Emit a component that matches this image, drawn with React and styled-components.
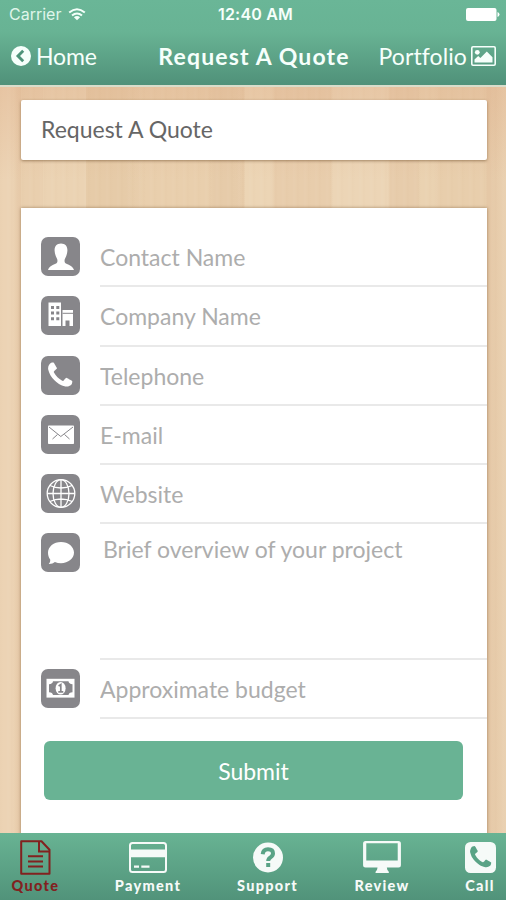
//react
import React, { useState } from 'react'

//style
import styled, { createGlobalStyle } from 'styled-components'

//icons
const PHONE = 'M1600 1240q0 27-10 70.5t-21 68.5q-21 50-122 106-94 51-186 51-27 0-53-3.5t-57-12.5-47-14.5-55.5-20.5-49.5-18q-98-35-175-83-127-79-264-216t-216-264q-48-77-83-175-3-9-18-49.5t-20.5-55.5-14.5-47-12.5-57-3.5-53q0-92 51-186 56-101 106-122 25-11 68.5-21t70.5-10q14 0 21 3 18 6 53 76 11 19 30 54t35 63.5 31 53.5q3 4 17.5 25t21.5 35.5 7 28.5q0 20-28.5 50t-62 55-62 53-28.5 46q0 9 5 22.5t8.5 20.5 14 24 11.5 19q76 137 174 235t235 174q2 1 19 11.5t24 14 20.5 8.5 22.5 5q18 0 46-28.5t53-62 55-62 50-28.5q14 0 28.5 7t35.5 21.5 25 17.5q25 15 53.5 31t63.5 35 54 30q70 35 76 53 3 7 3 21z'

const WifiIcon = () => (
    <svg width="18" height="13" viewBox="0 0 18 13" fill="none" stroke="#f4fffa" strokeWidth="2">
        <path d="M1.2 4.6Q9-2 16.8 4.6" />
        <path d="M4 7.6Q9 3.4 14 7.6" />
        <path d="M9 12.2L5.9 9.2Q9 7 12.1 9.2z" fill="#f4fffa" stroke="none" />
    </svg>
)

const BatteryIcon = () => (
    <svg width="34" height="13" viewBox="0 0 34 13" fill="#fff">
        <rect x="0" y="0" width="30.5" height="13" rx="2" />
        <path d="M31.5 4v5q2-.7 2-2.5t-2-2.5z" />
    </svg>
)

const BackIcon = () => (
    <svg width="20" height="20" viewBox="0 0 20 20">
        <circle cx="10" cy="10" r="10" fill="#f6fffb" />
        <path d="M12.2 4.8L7 10l5.2 5.2" fill="none" stroke="#4e9379" strokeWidth="2.9" />
    </svg>
)

const PictureIcon = () => (
    <svg width="25" height="20" viewBox="0 0 25 20" fill="#f6fffb">
        <rect x=".8" y=".8" width="23.4" height="18.4" rx="1.2" fill="none" stroke="#f6fffb" strokeWidth="1.6" />
        <circle cx="6.3" cy="6.3" r="2.4" />
        <path d="M3.500 16.500v-3l3.700-3.600 2.200 2.100 6.400-6.500 5.700 5.700v5.300z" />
    </svg>
)

const PersonIcon = () => (
    <svg width="39" height="39" viewBox="0 0 39 39" fill="#fff">
        <path d="M20 6.500c4.300 0 6.600 3 6.400 7.200-.1 2.300-.9 5.500-2.300 7.700-.8 1.200-.8 3.900.4 4.800 2.200 1.500 7.100 2 8.500 6.800H7c1.400-4.800 6.300-5.300 8.500-6.800 1.200-.9 1.200-3.600.4-4.800-1.400-2.200-2.200-5.400-2.300-7.700-.2-4.200 2.100-7.200 6.400-7.200z" />
    </svg>
)

const BuildingIcon = () => (
    <svg width="39" height="39" viewBox="0 0 39 39">
        <path d="M7.500 6.500h12.500v23.500H7.500zM21.500 14h10.500v16H21.500z" fill="#fff" />
        <path d="M10 10h3v3h-3zM15.300 10h3v3h-3zM10 15.600h3v3h-3zM15.300 15.600h3v3h-3zM10 21.200h3v3h-3zM15.300 21.200h3v3h-3zM24.500 24.500h4V30h-4z" fill="#87868a" />
        <path d="M21.500 17.300H32" stroke="#87868a" strokeWidth="1" />
    </svg>
)

const PhoneIcon = () => (
    <svg width="39" height="39" viewBox="0 0 39 39">
        <path d={PHONE} transform="translate(3.8 4.2) scale(.0172)" fill="#fff" />
    </svg>
)

const MailIcon = () => (
    <svg width="39" height="39" viewBox="0 0 39 39">
        <rect x="7" y="10.5" width="26" height="18.5" rx=".8" fill="#fff" />
        <path d="M8 12l11.800 9.500L32 12M11.500 24l5-4.500M28.500 24l-5-4.500" fill="none" stroke="#87868a" strokeWidth="1" />
    </svg>
)

const GlobeIcon = () => (
    <svg width="39" height="39" viewBox="0 0 39 39" fill="none" stroke="#fff" strokeWidth="1.3">
        <circle cx="20" cy="19.5" r="13.8" />
        <ellipse cx="20" cy="19.5" rx="8" ry="13.8" />
        <path d="M20 5.700v27.600M6.200 19.500h27.600M8.800 11.500q11.200 5 22.400 0M8.800 27.500q11.200-5 22.400 0" />
    </svg>
)

const ChatIcon = () => (
    <svg width="39" height="39" viewBox="0 0 39 39">
        <path d="M20 9c7.300 0 13 4.700 13 10.600s-5.700 10.700-13 10.700c-2.200 0-4.300-.4-6.100-1.200-1.500 1.300-3.600 2-6.200 1.900 1.200-1.100 1.700-2.600 1.500-4.400C7.700 24.700 7 22.300 7 19.600 7 13.700 12.700 9 20 9z" fill="#fff" />
    </svg>
)

const MoneyIcon = () => (
    <svg width="39" height="39" viewBox="0 0 39 39">
        <rect x="5.5" y="9.8" width="28" height="18.8" fill="#fff" />
        <path d="M12 12.300h15.500q.3 2.700 4 2.900v8q-3.700.2-4 2.900H12q-.3-2.700-4-2.900v-8q3.700-.2 4-2.900z" fill="#87868a" />
        <ellipse cx="19.6" cy="19.2" rx="5" ry="6.3" fill="#fff" />
        <path d="M17.600 17l2.200-1.400v7M17.300 22.800h5" fill="none" stroke="#87868a" strokeWidth="1.7" />
    </svg>
)

const FileIcon = () => (
    <svg width="31" height="35" viewBox="0 0 31 35" fill="none" stroke="#82211f" strokeWidth="2">
        <path d="M1.200 1.200h20.300l8 8.500V33.800H1.200z" strokeLinejoin="round" />
        <path d="M19 1.500v10h10.300M8 16.200h15M8 21.400h15M8 26.600h15" />
    </svg>
)

const CardIcon = () => (
    <svg width="38" height="31" viewBox="0 0 38 31" fill="#f6faf8">
        <rect x="1" y="1" width="36" height="29" rx="2.5" fill="none" stroke="#f6faf8" strokeWidth="2" />
        <path d="M1 7.500h36v7.700H1zM5 23.500h5v2.300H5zM12.300 23.500h8.200v2.300h-8.200z" />
    </svg>
)

const QuestionIcon = () => (
    <svg width="30" height="31" viewBox="0 0 30 31">
        <circle cx="15" cy="15.5" r="15" fill="#f6faf8" />
        <path d="M9.700 12.200Q10.200 7.300 15 7.300q5 0 5 4.300 0 2.200-2.500 3.800-2.300 1.500-2.300 3.600" fill="none" stroke="#5aa386" strokeWidth="4" />
        <path d="M13.200 21h4v4h-4z" fill="#5aa386" />
    </svg>
)

const DesktopIcon = () => (
    <svg width="38" height="33" viewBox="0 0 39 34" fill="#f6faf8">
        <path fillRule="evenodd" d="M2.600 0h33.800Q39 0 39 2.600v22.200q0 2.600-2.600 2.600H24.500q.2 2.600 1.500 3.600.6.500.6 2H12.800q0-1.500.6-2 1.300-1 1.500-3.600H2.600Q0 27.400 0 24.800V2.600Q0 0 2.600 0zM3.300 2.300v17.800h32.400V2.300z" />
    </svg>
)

const CallIcon = () => (
    <svg width="31" height="31" viewBox="0 0 31 31">
        <rect width="31" height="31" rx="5.5" fill="#f6faf8" />
        <path d={PHONE} transform="translate(2.2 2.2) scale(.015)" fill="#5aa386" />
    </svg>
)

const fields = [
    { name: 'contact', placeholder: 'Contact Name', Icon: PersonIcon },
    { name: 'company', placeholder: 'Company Name', Icon: BuildingIcon },
    { name: 'telephone', placeholder: 'Telephone', Icon: PhoneIcon },
    { name: 'email', placeholder: 'E-mail', Icon: MailIcon },
    { name: 'website', placeholder: 'Website', Icon: GlobeIcon },
    { name: 'overview', placeholder: 'Brief overview of your project', Icon: ChatIcon, area: true },
    { name: 'budget', placeholder: 'Approximate budget', Icon: MoneyIcon },
]

const tabs = [
    { label: 'Quote', Icon: FileIcon, width: 71, active: true },
    { label: 'Payment', Icon: CardIcon, width: 154 },
    { label: 'Support', Icon: QuestionIcon, width: 85 },
    { label: 'Review', Icon: DesktopIcon, width: 144 },
    { label: 'Call', Icon: CallIcon, width: 52 },
]

const App = () => {
    const [values, setValues] = useState({})

    const handleChange = e => {
        setValues({ ...values, [e.target.name]: e.target.value })
    }

    const handleSubmit = e => {
        e.preventDefault()
        setValues({})
    }

    return (
        <Screen>
            <GlobalStyle />
            <Header>
                <StatusBar>
                    <Carrier>Carrier <WifiIcon /></Carrier>
                    <Clock>12:40 AM</Clock>
                    <Battery><BatteryIcon /></Battery>
                </StatusBar>
                <NavBar>
                    <NavButton><BackIcon />Home</NavButton>
                    <NavTitle>Request A Quote</NavTitle>
                    <NavButton $right>Portfolio<PictureIcon /></NavButton>
                </NavBar>
            </Header>

            <Content>
                <TitleCard>Request A Quote</TitleCard>
                <FormCard onSubmit={handleSubmit}>
                    {fields.map(({ name, placeholder, Icon, area }) => (
                        <Row key={name} $area={area}>
                            <IconBox><Icon /></IconBox>
                            <Field>
                                {area
                                    ? <TextArea name={name} placeholder={placeholder} value={values[name] || ''} onChange={handleChange} />
                                    : <Input name={name} placeholder={placeholder} value={values[name] || ''} onChange={handleChange} />}
                            </Field>
                        </Row>
                    ))}
                    <Submit type="submit">Submit</Submit>
                </FormCard>
            </Content>

            <TabBar>
                {tabs.map(({ label, Icon, width, active }) => (
                    <Tab key={label} $width={width} $active={active}>
                        <TabIcon><Icon /></TabIcon>
                        {label}
                    </Tab>
                ))}
            </TabBar>
        </Screen>
    )
}

export default App


// ================================= styling =================================


const GlobalStyle = createGlobalStyle`
    * {
        box-sizing: border-box;
    }

    body {
        margin: 0;
    }

    svg {
        display: block;
        flex: none;
    }
`

// phone screen with the wooden planks behind everything
const Screen = styled.div`
    display: flex;
    flex-direction: column;
    width: 506px;
    height: 900px;
    overflow: hidden;
    font-family: Lato, sans-serif;
    background:
        linear-gradient(180deg, rgba(220, 165, 125, .3) 86px, rgba(214, 170, 125, 0) 180px),
        repeating-linear-gradient(90deg, rgba(160, 110, 60, .015) 0 1px, transparent 3px 6px, rgba(255, 255, 255, .03) 8px, transparent 11px),
        linear-gradient(90deg, #ecd3b4 0 13px, #e6c9a7 19px 21px, #e9cfae 21px 43px, #ebd3b3 43px 86px, #e6cba8 86px 125px, #e9cfad 145px 208px, #e6cba9 214px 232px, #e7ccaa 244px, #ecd5b5 245px 270px, #e8cdac 275px 330px, #ecd5b6 333px 388px, #e7ccab 390px 418px, #ead2b1 420px 434px, #e8ceac 438px 486px, #e5c8a6 487px 490px, #ead1b1 506px);
`

const Header = styled.header`
    flex: none;
    height: 87px;
    border-bottom: 2px solid #d8ddcb;
    background: linear-gradient(180deg, #6ab697 0, #68b394 32px, #509179 100%);
    color: #f6fffb;
`

const StatusBar = styled.div`
    display: grid;
    grid-template-columns: 1fr auto 1fr;
    align-items: center;
    height: 28px;
    padding: 0 6px 0 9px;
    font-family: Inter, sans-serif;
    font-size: 16px;
`

const Carrier = styled.div`
    display: flex;
    align-items: center;
    gap: 7px;
    color: #dff5ea;
`

const Clock = styled.div`
    padding-left: 2px;
    font-weight: 600;
    letter-spacing: .2px;
`

const Battery = styled.div`
    justify-self: end;
`

const NavBar = styled.nav`
    display: grid;
    grid-template-columns: 1fr auto 1fr;
    align-items: center;
    height: 55px;
    padding: 0 10px 0 11px;
`

const NavButton = styled.a`
    display: flex;
    align-items: center;
    justify-self: ${props => props.$right ? 'end' : 'start'};
    gap: ${props => props.$right ? '4px' : '5px'};
    font-size: 23px;
    line-height: 26px;
    letter-spacing: ${props => props.$right ? '.1px' : '-.1px'};
`

const NavTitle = styled.h1`
    margin: 0;
    padding-left: 1px;
    font-size: 23px;
    font-weight: 700;
    letter-spacing: 1.15px;
`

const Content = styled.main`
    flex: 1;
    min-height: 0;
    padding: 13px 19px 0 21px;
`

const TitleCard = styled.h2`
    height: 60px;
    margin: 0 0 48px;
    padding: 0 20px;
    border-radius: 2px;
    background: #fff;
    box-shadow: 0 1px 3px rgba(90, 55, 20, .5);
    color: #666;
    font-size: 23px;
    font-weight: 400;
    line-height: 59px;
`

const FormCard = styled.form`
    height: 640px;
    padding-top: 20px;
    background: #fff;
    box-shadow: 0 0 3px rgba(90, 55, 20, .5);
`

const Row = styled.div`
    display: flex;
    height: ${props => props.$area ? '135.3px' : '59.3px'};
    padding-left: 20px;
    gap: 20px;
`

const IconBox = styled.div`
    flex: none;
    width: 39px;
    height: 39px;
    margin-top: 9px;
    border-radius: 7px;
    background: #87868a;
`

const Field = styled.div`
    flex: 1;
    border-bottom: 2px solid #e9e9e9;
`

const Input = styled.input`
    width: 100%;
    height: 100%;
    padding: 1px 0 0;
    border: none;
    outline: none;
    background: none;
    color: #5c5c5c;
    font: 400 23px Lato, sans-serif;

    &::placeholder {
        color: #adadad;
        opacity: 1;
    }
`

const TextArea = styled(Input).attrs({ as: 'textarea' })`
    display: block;
    padding: 11px 3px 0;
    resize: none;
`

const Submit = styled.button`
    display: block;
    width: 419px;
    height: 59px;
    margin: 22px 0 0 23px;
    border: none;
    border-radius: 6px;
    background: #69b394;
    color: #fff;
    font: 400 23px Lato, sans-serif;
    cursor: pointer;
`

const TabBar = styled.nav`
    display: flex;
    flex: none;
    height: 67px;
    background: linear-gradient(180deg, #68b393, #51937a);
`

const Tab = styled.a`
    display: flex;
    flex: none;
    flex-direction: column;
    align-items: center;
    width: ${props => props.$width}px;
    color: ${props => props.$active ? '#82211f' : '#f6faf8'};
    font-size: 14.5px;
    font-weight: 900;
    letter-spacing: 1.3px;
    line-height: 19px;
`

const TabIcon = styled.span`
    display: flex;
    align-items: center;
    height: 43px;
    padding-top: 5px;
`
